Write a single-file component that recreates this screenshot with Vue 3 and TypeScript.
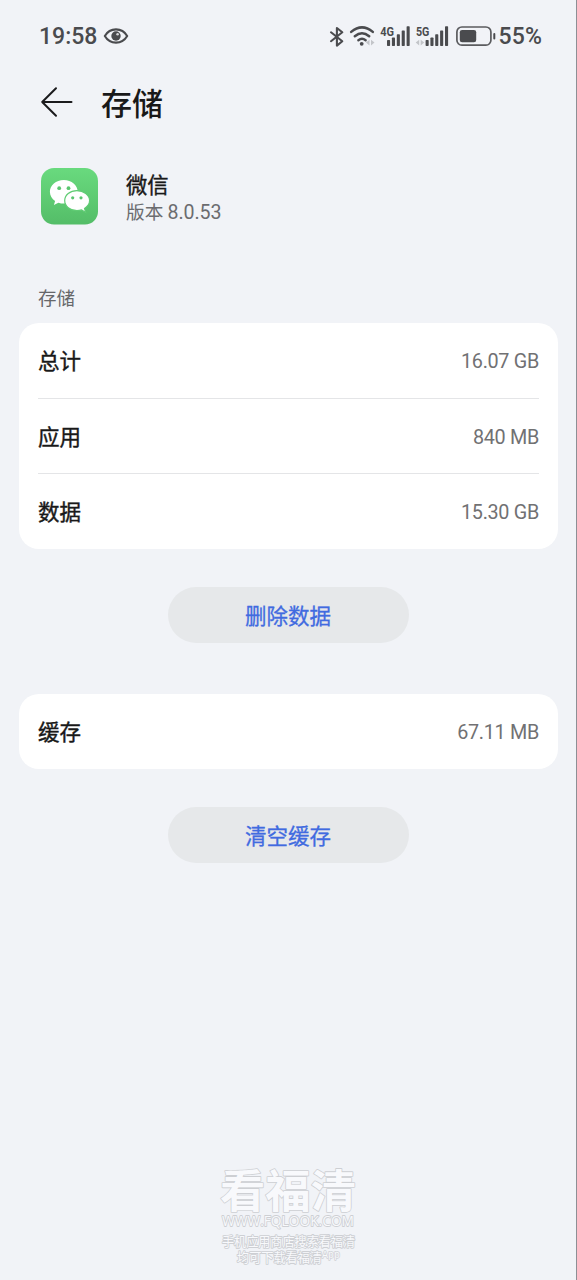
<script setup lang="ts">
interface Entry {
  label: string
  value: string
}

const storage: Entry[] = [
  { label: '总计', value: '16.07 GB' },
  { label: '应用', value: '840 MB' },
  { label: '数据', value: '15.30 GB' },
]
const cache: Entry[] = [{ label: '缓存', value: '67.11 MB' }]
</script>

<template>
  <div class="screen">
    <div class="status">
      <span class="clock">19:58</span>
      <svg class="eye" width="26" height="18" viewBox="0 0 26 18">
        <path d="M1.8 9C7 .2 19 .2 24.2 9C19 17.8 7 17.8 1.8 9Z" fill="none" stroke="#4a4b4e" stroke-width="2.1" stroke-linejoin="round" />
        <circle cx="13" cy="9" r="4.7" fill="#4a4b4e" />
        <circle cx="14.6" cy="7.2" r="1.3" fill="#d5d6d9" />
      </svg>
      <svg class="signals" width="168" height="28" viewBox="328 22 168 28">
        <path d="M331 31.3L342.3 40.2L336.9 44.6V27L342.3 31.3L331 40.2" fill="none" stroke="#4a4b4e" stroke-width="2.1" stroke-linejoin="round" stroke-linecap="round" />
        <g fill="none" stroke="#4a4b4e" stroke-width="2.5" stroke-linecap="round">
          <path d="M351.2 30.9Q362 21.9 372.8 30.9" />
          <path d="M354.8 35.3Q362 29.2 369.2 35.3" />
          <path d="M358.4 39.2Q362 36.4 365.6 39.2" />
        </g>
        <circle cx="361.7" cy="42.8" r="1.9" fill="#4a4b4e" />
        <path d="M369.5 38.8V44.4L366 41.6ZM371 38.8V44.4L374.5 41.6Z" fill="#c3c5c9" />
        <text x="380.3" y="34.6" textLength="13.8" lengthAdjust="spacingAndGlyphs" class="network">4G</text>
        <g fill="#4a4b4e">
          <rect x="387" y="39" width="3.1" height="6" rx=".7" />
          <rect x="391.9" y="36.6" width="3.1" height="8.4" rx=".7" />
          <rect x="396.8" y="33.2" width="3.1" height="11.8" rx=".7" />
          <rect x="401.7" y="29.4" width="3.1" height="15.6" rx=".7" />
          <rect x="406.6" y="25.2" width="3.1" height="19.8" rx=".7" />
        </g>
        <text x="416" y="34.6" textLength="13.4" lengthAdjust="spacingAndGlyphs" class="network">5G</text>
        <path d="M419.2 38.8V44.4L415.7 41.6ZM420.7 38.8V44.4L424.2 41.6Z" fill="#c3c5c9" />
        <g fill="#4a4b4e">
          <rect x="425.6" y="39" width="3.1" height="6" rx=".7" />
          <rect x="430.4" y="36.6" width="3.1" height="8.4" rx=".7" />
          <rect x="435.2" y="33.2" width="3.1" height="11.8" rx=".7" />
          <rect x="440.1" y="29.4" width="3.1" height="15.6" rx=".7" />
          <rect x="445" y="25.2" width="3.1" height="19.8" rx=".7" />
        </g>
        <rect x="456.9" y="26" width="34" height="18.2" rx="5" fill="none" stroke="#5b5c5f" stroke-width="1.7" />
        <rect x="459.8" y="28.9" width="16.4" height="12.4" rx="2.3" fill="#4a4b4e" />
        <path d="M494.3 33V37.4" stroke="#4a4b4e" stroke-width="2" stroke-linecap="round" />
      </svg>
      <span class="percent">55%</span>
    </div>

    <header class="title-bar">
      <svg width="34" height="32" viewBox="0 0 34 32" fill="none" stroke="#1b1b1d" stroke-width="2" stroke-linecap="round" stroke-linejoin="round">
        <path d="M31.5 16H2.2M16 2.2L2.2 16L16 29.8" />
      </svg>
      <h1>存储</h1>
    </header>

    <section class="app">
      <svg class="logo" width="57" height="57" viewBox="0 0 57 57">
        <defs>
          <linearGradient id="green" x1="0" y1="0" x2="0" y2="1">
            <stop offset="0" stop-color="#69da7e" />
            <stop offset="1" stop-color="#54bd68" />
          </linearGradient>
        </defs>
        <rect width="57" height="56.5" rx="13" fill="url(#green)" />
        <path d="M22.8 12C15 12 8.9 17.2 8.9 23.8C8.9 27.6 10.9 30.9 14.1 33.1L12.9 37L17.4 34.7C19.1 35.3 21 35.6 22.8 35.6C30.6 35.6 36.7 30.4 36.7 23.8S30.6 12 22.8 12Z" fill="#fff" />
        <path d="M35.9 22.6C29 22.6 23.7 27 23.7 32.6S29 42.6 35.9 42.6C37.5 42.6 39.1 42.4 40.5 41.9L44.6 44.2L43.5 40.4C46.5 38.6 48.6 35.8 48.6 32.6C48.6 27 42.7 22.6 35.9 22.6Z" fill="#fff" stroke="#60cc74" stroke-width="1.2" />
        <g fill="#5ac66f">
          <circle cx="18.2" cy="20.2" r="1.9" />
          <circle cx="27.5" cy="20.2" r="1.9" />
          <circle cx="31.7" cy="29.8" r="1.6" />
          <circle cx="40" cy="29.8" r="1.6" />
        </g>
      </svg>
      <div class="app-text">
        <div class="name">微信</div>
        <div class="version">版本 <span class="number">8.0.53</span></div>
      </div>
    </section>

    <h2 class="label">存储</h2>
    <div class="card">
      <div v-for="item in storage" :key="item.label" class="row">
        <span class="key">{{ item.label }}</span>
        <span class="value">{{ item.value }}</span>
      </div>
    </div>
    <button class="action" type="button">删除数据</button>

    <div class="card second">
      <div v-for="item in cache" :key="item.label" class="row">
        <span class="key">{{ item.label }}</span>
        <span class="value">{{ item.value }}</span>
      </div>
    </div>
    <button class="action" type="button">清空缓存</button>

    <svg class="watermark" width="150" height="132" viewBox="214 1142 150 132">
      <text x="220" y="1207.5" textLength="136" lengthAdjust="spacingAndGlyphs" class="brand">看福清</text>
      <text x="222" y="1226.3" textLength="132" lengthAdjust="spacingAndGlyphs" class="site">WWW.FQLOOK.COM</text>
      <text x="222" y="1245.7" textLength="133" lengthAdjust="spacingAndGlyphs" class="note">手机应用商店搜索看福清</text>
      <text x="237" y="1262" textLength="85" lengthAdjust="spacingAndGlyphs" class="note">均可下载看福清</text>
      <text x="322" y="1258" textLength="18" lengthAdjust="spacingAndGlyphs" class="app-note">App</text>
    </svg>
  </div>
</template>

<style>
body {
  background: #f1f3f7;
}
</style>

<style scoped>
.screen {
  box-sizing: border-box;
  width: 577px;
  height: 1280px;
  overflow: hidden;
  display: flex;
  flex-direction: column;
  background: #f1f3f7;
  border-right: 1px solid #8d8f95;
  font-family: "Noto Sans CJK SC", sans-serif;
  color: #191919;
}
.status {
  display: flex;
  align-items: center;
  height: 71px;
  flex: none;
  padding: 0 30px 0 39px;
  color: #4a4b4e;
  font-family: Roboto, sans-serif;
  font-size: 23px;
  font-weight: 500;
  line-height: 71px;
}
.clock {
  width: 58px;
  padding-top: 1px;
  white-space: nowrap;
}
.eye {
  margin-left: 6px;
}
.signals {
  flex: none;
  margin: 2px 0 0 199px;
}
.percent {
  margin-left: 2.5px;
  padding-top: 1px;
  letter-spacing: 0.2px;
}
.network {
  font: 700 12.5px Roboto, sans-serif;
  fill: #4a4b4e;
}
.title-bar {
  display: flex;
  align-items: center;
  height: 62px;
  flex: none;
  padding-left: 40px;
  gap: 27px;
}
h1 {
  margin: 0;
  font-size: 31px;
  font-weight: 500;
  line-height: 62px;
}
.app {
  display: flex;
  height: 57px;
  flex: none;
  margin-top: 35px;
  padding-left: 41px;
  gap: 28px;
}
.app-text {
  display: flex;
  flex-direction: column;
}
.name {
  font-size: 21.3px;
  font-weight: 400;
  line-height: 32px;
  -webkit-text-stroke: 0.4px #191919;
}
.version {
  font-size: 18.7px;
  line-height: 22px;
  color: #6b6c6f;
}
.number {
  font-family: Roboto, sans-serif;
  font-size: 19.6px;
  letter-spacing: -0.1px;
}
.label {
  height: 30px;
  flex: none;
  margin: 57px 0 11px 38px;
  font-size: 18.5px;
  font-weight: 400;
  line-height: 30px;
  color: #66676a;
}
.card {
  flex: none;
  margin: 0 18px 0 19px;
  padding: 0 19px;
  border-radius: 20px;
  background: #fff;
}
.row {
  box-sizing: border-box;
  display: flex;
  align-items: center;
  justify-content: space-between;
  height: 75.2px;
  line-height: 73px;
}
.row + .row {
  border-top: 1px solid #e4e5e7;
}
.key {
  padding-bottom: 2px;
  font-size: 21.5px;
  -webkit-text-stroke: 0.4px #191919;
}
.value {
  padding-top: 2px;
  font-family: Roboto, sans-serif;
  font-size: 19.8px;
  letter-spacing: -0.3px;
  color: #717173;
}
.action {
  flex: none;
  align-self: center;
  width: 241px;
  height: 56px;
  margin: 38px 0 0;
  padding: 0;
  border: 0;
  border-radius: 28px;
  background: #e6e8ea;
  color: #416be0;
  font: 400 21.5px/56px "Noto Sans CJK SC", sans-serif;
  -webkit-text-stroke: 0.3px #416be0;
}
.second {
  margin-top: 51px;
}
.watermark {
  margin: 279px 0 0 214px;
  flex: none;
  overflow: visible;
  fill: #f8f9fc;
  stroke: #cdcfd3;
  stroke-width: 1.3px;
  paint-order: stroke;
  stroke-linejoin: round;
}
.brand {
  font: 700 45.5px "Noto Sans CJK SC", sans-serif;
  stroke-width: 1.6px;
}
.site {
  font: 400 15px "Open Sans", sans-serif;
  stroke-width: 1.8px;
}
.note {
  font: 400 13px "Noto Sans CJK SC", sans-serif;
  stroke-width: 1.8px;
}
.app-note {
  font: 400 10px "Liberation Mono", monospace;
}
</style>
